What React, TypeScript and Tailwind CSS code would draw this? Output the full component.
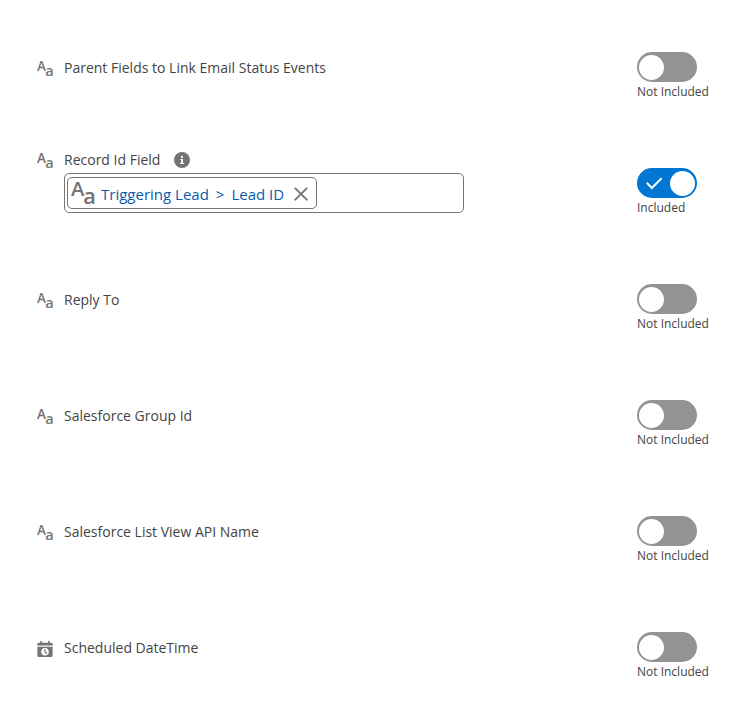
import { useState } from "react";

interface Field {
  id: string;
  label: string;
  type: "text" | "datetime";
  value?: string[];
}

const FIELDS: Field[] = [
  { id: "parentFields", label: "Parent Fields to Link Email Status Events", type: "text" },
  { id: "recordId", label: "Record Id Field", type: "text", value: ["Triggering Lead", "Lead ID"] },
  { id: "replyTo", label: "Reply To", type: "text" },
  { id: "groupId", label: "Salesforce Group Id", type: "text" },
  { id: "listView", label: "Salesforce List View API Name", type: "text" },
  { id: "scheduled", label: "Scheduled DateTime", type: "datetime" },
];

function TextIcon({ className }: { className: string }) {
  return (
    <svg viewBox="0 0 16 16" className={className} fill="#747474" aria-hidden="true">
      <text x="0" y="9.8" fontSize="13.5" fontWeight="600">A</text>
      <text x="8.2" y="15.3" fontSize="14.5" fontWeight="600">a</text>
    </svg>
  );
}

function DateTimeIcon({ className }: { className: string }) {
  return (
    <svg viewBox="0 0 16 16" className={className} aria-hidden="true">
      <path
        fill="#747474"
        d="M3.3 0.6a.8.8 0 0 1 1.6 0V1.8h6.2V.6a.8.8 0 0 1 1.6 0V1.8h1.6A1.5 1.5 0 0 1 15.8 3.3V4.6H.2V3.3A1.5 1.5 0 0 1 1.7 1.8H3.3zM.4 5.8h15.2v8.8a1.5 1.5 0 0 1-1.5 1.5H1.9a1.5 1.5 0 0 1-1.5-1.5z"
      />
      <circle cx="8" cy="10.8" r="3.8" fill="#fff" />
      <path d="M8 8.6v2.3l1.5 1.4" fill="none" stroke="#747474" strokeWidth="1.2" strokeLinecap="round" />
    </svg>
  );
}

function InfoIcon() {
  return (
    <svg viewBox="0 0 16 16" className="size-4" aria-hidden="true">
      <circle cx="8" cy="8" r="8" fill="#747474" />
      <circle cx="8" cy="4.9" r="1.1" fill="#fff" />
      <path d="M6.4 7h2.6v3.9h1v1.1H6.1v-1.1h1V8h-.7z" fill="#fff" />
    </svg>
  );
}

function Toggle({ label, checked, onChange }: { label: string; checked: boolean; onChange: () => void }) {
  return (
    <label className="w-18 shrink-0 pt-4.5 cursor-pointer">
      <input type="checkbox" className="peer sr-only" aria-label={label} checked={checked} onChange={onChange} />
      <span
        className={`flex h-7.5 w-15 items-center rounded-full peer-focus-visible:ring-2 peer-focus-visible:ring-[#0176d3] ${
          checked ? "justify-between bg-[#0176d3] pr-0.5 pl-2" : "bg-[#939393] pl-0.5"
        }`}
      >
        {checked && (
          <svg viewBox="0 0 18 14" className="h-3.5 w-4.5" fill="none" stroke="#fff" strokeWidth="2" aria-hidden="true">
            <path d="M1.8 6.8l5 5.2L16.6 2.2" />
          </svg>
        )}
        <span className="size-[25px] rounded-full bg-white" />
      </span>
      <span className="block text-xs leading-5 whitespace-nowrap text-[#444]">
        {checked ? "Included" : "Not Included"}
      </span>
    </label>
  );
}

function Lookup({ id, value }: { id: string; value: string[] }) {
  const [pill, setPill] = useState<string[] | null>(value);

  return (
    <div className="mt-[3px] flex h-10 w-full max-w-100 items-center rounded-[5px] border border-[#747474] px-0.5">
      {pill && (
        <span className="flex h-8 shrink-0 items-center rounded-[5px] border border-[#747474] pr-2 pl-[3px]">
          <TextIcon className="size-6 overflow-visible" />
          <span className="ml-1.5 flex gap-[7px] pt-0.5 text-[15px] text-[#0b5cab]">
            <span>{pill[0]}</span>
            <span>&gt;</span>
            <span>{pill[1]}</span>
          </span>
          <button type="button" aria-label="Remove" className="ml-2.5 cursor-pointer pt-0.5" onClick={() => setPill(null)}>
            <svg viewBox="0 0 14 14" className="size-3.5" stroke="#747474" strokeWidth="1.9" strokeLinecap="round" aria-hidden="true">
              <path d="M1.3 1.3l11.4 11.4M12.7 1.3L1.3 12.7" />
            </svg>
          </button>
        </span>
      )}
      <input id={id} type="text" className="ml-2 h-full min-w-0 flex-1 bg-transparent text-[15px] text-[#444] outline-none" />
    </div>
  );
}

function FieldRow({ field }: { field: Field }) {
  const [included, setIncluded] = useState(Boolean(field.value));
  const Icon = field.type === "datetime" ? DateTimeIcon : TextIcon;

  return (
    <li className="flex min-h-29 items-start justify-between gap-4 last:min-h-0">
      <div className={`flex min-w-0 flex-1 gap-[11px] ${field.value ? "" : "pt-6"}`}>
        <Icon className="mt-[3px] size-4 shrink-0 overflow-visible" />
        <div className="min-w-0 flex-1">
          <div className="flex h-5 items-center gap-3.5">
            {field.value ? <label htmlFor={field.id}>{field.label}</label> : <span>{field.label}</span>}
            {field.value && (
              <button type="button" aria-label="Help">
                <InfoIcon />
              </button>
            )}
          </div>
          {field.value && <Lookup id={field.id} value={field.value} />}
        </div>
      </div>
      <Toggle label={field.label} checked={included} onChange={() => setIncluded(!included)} />
    </li>
  );
}

export default function App() {
  return (
    <main className="bg-white pt-8.5 pr-[45px] pb-6 pl-[37px] font-['Open_Sans','Noto_Sans',sans-serif] text-sm leading-5 text-[#444]">
      <ul>
        {FIELDS.map((field) => (
          <FieldRow key={field.id} field={field} />
        ))}
      </ul>
    </main>
  );
}
